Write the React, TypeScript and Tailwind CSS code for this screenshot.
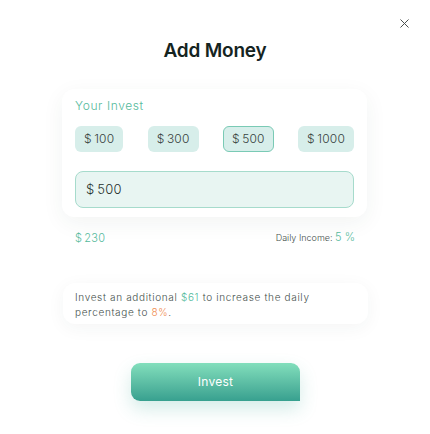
import { X } from "lucide-react";

const amounts = [
  { label: "100", active: false },
  { label: "300", active: false },
  { label: "500", active: true },
  { label: "1000", active: false },
];

export default function App() {
  return (
    <div className="relative w-[430px] h-[434px] bg-white font-['Inter','Noto_Sans',sans-serif] font-light text-[#2f3b37]">
      <button className="absolute top-[14px] right-[16px] p-[2px] text-[#4b4f4e]">
        <X className="w-[15px] h-[15px]" strokeWidth={1.6} />
      </button>

      <h1 className="pt-[39px] text-center text-[19px] leading-[24px] font-semibold text-[#15241f] tracking-[-0.2px]">
        Add Money
      </h1>

      {/* amount card */}
      <div className="mt-[26px] ml-[62px] w-[305px] rounded-xl bg-white px-[13px] pt-[9px] pb-[9px] shadow-[0_6px_22px_rgba(30,60,50,0.06)]">
        <div className="text-[12px] leading-[16px] tracking-[0.6px] text-[#55ba9c]">Your Invest</div>
        <div className="mt-[12px] flex items-center justify-between">
          {amounts.map((a) => (
            <button
              key={a.label}
              className={`h-[26px] rounded-[6px] bg-[#d7eeea] px-[8px] text-[12px] leading-[16px] font-light tracking-[0.2px] text-[#38433f] ${
                a.active ? "border border-[#7acab5]" : "border border-transparent"
              }`}
            >
              ${"\u2009"}
              {a.label}
            </button>
          ))}
        </div>
        <div className="mt-[19px] flex h-[37px] items-center rounded-[8px] border border-[#a6dbcc] bg-[#e8f5f2] px-[10px] text-[13px] tracking-[0.3px] text-[#27312e]">
          ${"\u2009"}500
        </div>
      </div>

      <div className="mt-[13px] ml-[75px] flex w-[280px] items-center justify-between leading-[14px]">
        <span className="text-[11px] tracking-[0.2px] text-[#55ba9c]">${"\u2009"}230</span>
        <span className="text-[9px] text-[#45504c]">
          Daily Income: <span className="text-[11px] text-[#55ba9c]">5 %</span>
        </span>
      </div>

      {/* hint card */}
      <div className="mt-[38px] ml-[63px] w-[305px] rounded-xl bg-white px-[12px] pt-[7px] pb-[4px] text-[10px] leading-[15px] tracking-[0.65px] text-[#45504c] shadow-[0_4px_18px_rgba(30,60,50,0.05)]">
        Invest an additional <span className="text-[#55ba9c]">$61</span> to increase the daily
        <br />
        percentage to <span className="text-[#f08a4b]">8%</span>.
      </div>

      <div className="mt-[39px] flex justify-center">
        <button className="ml-[1px] h-[38px] w-[169px] rounded-[9px] rounded-br-none bg-gradient-to-b from-[#82dfbc] to-[#37a08f] text-[12px] font-normal tracking-[0.3px] text-white shadow-[0_8px_18px_rgba(60,170,150,0.22)]">
          Invest
        </button>
      </div>
    </div>
  );
}
